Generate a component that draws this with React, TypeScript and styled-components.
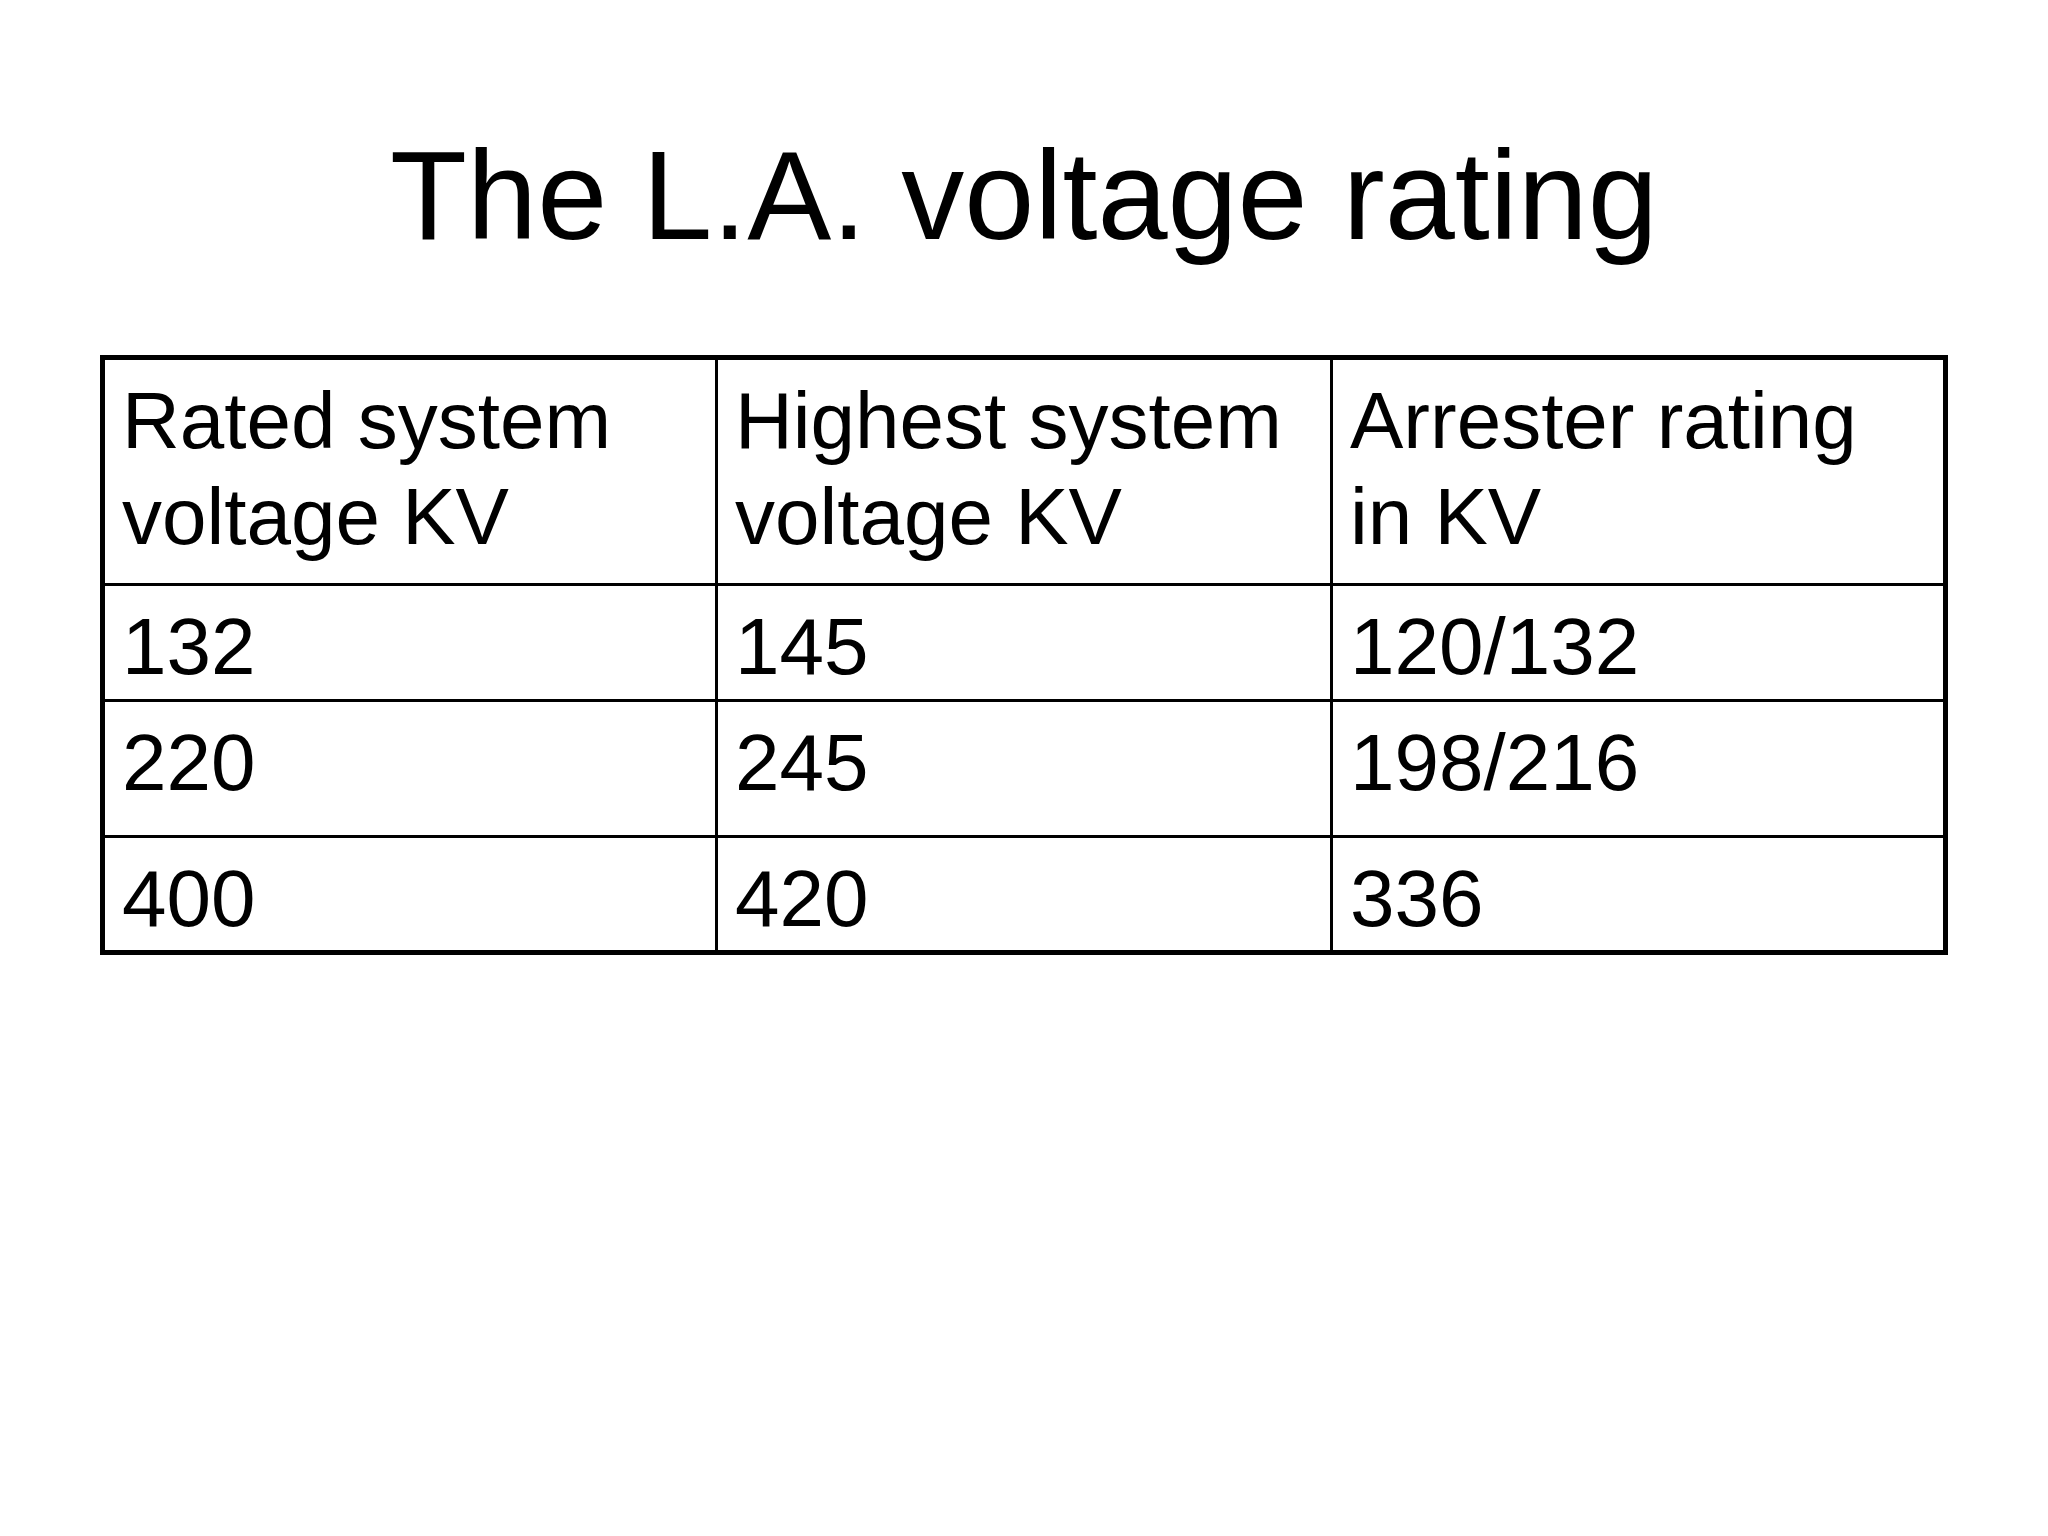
import { createGlobalStyle, styled } from "styled-components";

const GlobalStyle = createGlobalStyle`
  html, body {
    margin: 0;
    padding: 0;
    background: #ffffff;
  }
  body {
    font-family: "Liberation Sans", Arial, sans-serif;
    color: #000000;
  }
`;

const Slide = styled.div`
  width: 2048px;
  height: 1536px;
  box-sizing: border-box;
  padding-top: 120px;
  display: flex;
  flex-direction: column;
  align-items: center;
`;

const Title = styled.h1`
  margin: 0 0 84px;
  font-size: 126px;
  font-weight: 400;
  line-height: 1.2;
  white-space: nowrap;
`;

const Table = styled.table`
  width: 1848px;
  table-layout: fixed;
  border-collapse: separate;
  border-spacing: 0;
  border: 5px solid #000;
  box-sizing: border-box;
`;

const Col = styled.col<{ $w: number }>`
  width: ${(p) => p.$w}px;
`;

const Row = styled.tr<{ $h: number; $last?: boolean }>`
  height: ${(p) => p.$h}px;
  td {
    border-bottom: ${(p) => (p.$last ? "none" : "3px solid #000")};
  }
`;

const Cell = styled.td`
  box-sizing: border-box;
  vertical-align: top;
  padding: 13px 10px 0 17px;
  font-size: 80px;
  line-height: 96px;
  border-right: 3px solid #000;
  &:last-child {
    border-right: none;
  }
`;

const cols = [613, 615, 610];

const rows = [
  { h: 226, cells: ["Rated system voltage KV", "Highest system voltage KV", "Arrester rating in KV"] },
  { h: 116, cells: ["132", "145", "120/132"] },
  { h: 136, cells: ["220", "245", "198/216"] },
  { h: 112, cells: ["400", "420", "336"] },
];

export default function App() {
  return (
    <>
      <GlobalStyle />
      <Slide>
        <Title>The L.A. voltage rating</Title>
        <Table>
          <colgroup>
            {cols.map((w, i) => (
              <Col key={i} $w={w} />
            ))}
          </colgroup>
          <tbody>
            {rows.map((row, i) => (
              <Row key={i} $h={row.h} $last={i === rows.length - 1}>
                {row.cells.map((c, j) => (
                  <Cell key={j}>{c}</Cell>
                ))}
              </Row>
            ))}
          </tbody>
        </Table>
      </Slide>
    </>
  );
}
